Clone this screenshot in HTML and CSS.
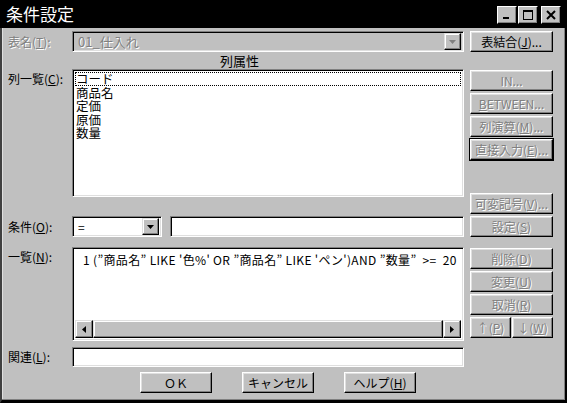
FILE: index.html
```html
<!DOCTYPE html>
<html lang="ja">
<head>
    <meta charset="UTF-8">
    <title>条件設定</title>
    <link rel="stylesheet" href="styles.css">
</head>
<body>
<div class="window">
    <div class="titlebar">
        <span class="title">条件設定</span>
        <div class="title-btns">
            <span class="tbtn">
                <svg width="10" height="10" viewBox="0 0 10 10"><rect x="1" y="7" width="6" height="2" fill="#000"/></svg>
            </span>
            <span class="tbtn">
                <svg width="12" height="12" viewBox="0 0 12 12"><rect x="1.5" y="1.5" width="9" height="9" fill="none" stroke="#000"/><rect x="1" y="1" width="10" height="2" fill="#000"/></svg>
            </span>
            <span class="tbtn close">
                <svg width="10" height="10" viewBox="0 0 10 10"><path d="M1 1 L9 9 M9 1 L1 9" stroke="#000" stroke-width="2"/></svg>
            </span>
        </div>
    </div>

    <div class="frame">
        <div class="main">
            <div class="row row-table">
                <span class="lbl off">表名(<u>T</u>):</span>
                <div class="combo wide off">
                    <span class="combo-val">01_仕入れ</span>
                    <span class="drop">
                        <svg width="7" height="4" viewBox="0 0 7 4"><path d="M0 0 H7 L3.5 4 Z" fill="#808080"/></svg>
                    </span>
                </div>
            </div>

            <div class="colhead">列属性</div>

            <div class="row row-cols">
                <span class="lbl">列一覧(<u>C</u>):</span>
                <ul class="listbox cols">
                    <li class="focus">コード</li>
                    <li>商品名</li>
                    <li>定価</li>
                    <li>原価</li>
                    <li>数量</li>
                </ul>
            </div>

            <div class="row row-cond">
                <span class="lbl">条件(<u>O</u>):</span>
                <div class="combo small">
                    <span class="combo-val">=</span>
                    <span class="drop">
                        <svg width="7" height="4" viewBox="0 0 7 4"><path d="M0 0 H7 L3.5 4 Z" fill="#000"/></svg>
                    </span>
                </div>
                <div class="field cond-text"></div>
            </div>

            <div class="row row-list">
                <span class="lbl">一覧(<u>N</u>):</span>
                <div class="listbox conds">
                    <div class="cond-line">1 (”商品名” LIKE '色%' OR ”商品名” LIKE 'ペン')AND ”数量”&nbsp; &gt;=&nbsp; 20</div>
                    <div class="hscroll">
                        <span class="sbtn">
                            <svg width="4" height="7" viewBox="0 0 4 7"><path d="M4 0 V7 L0 3.5 Z" fill="#000"/></svg>
                        </span>
                        <span class="thumb"></span>
                        <span class="sbtn">
                            <svg width="4" height="7" viewBox="0 0 4 7"><path d="M0 0 V7 L4 3.5 Z" fill="#000"/></svg>
                        </span>
                    </div>
                </div>
            </div>

            <div class="row row-rel">
                <span class="lbl">関連(<u>L</u>):</span>
                <div class="field rel-text"></div>
            </div>

            <div class="actions">
                <button class="btn">ＯＫ</button>
                <button class="btn">キャンセル</button>
                <button class="btn">ヘルプ(<u>H</u>)</button>
            </div>
        </div>

        <div class="side">
            <button class="btn b-join">表結合(<u>J</u>)...</button>
            <button class="btn off b-in">IN...</button>
            <button class="btn off"><u>B</u>ETWEEN...</button>
            <button class="btn off">列演算(<u>M</u>)...</button>
            <button class="btn off default">直接入力(<u>E</u>)...</button>
            <button class="btn off b-var">可変記号(<u>V</u>)...</button>
            <button class="btn off">設定(<u>S</u>)</button>
            <button class="btn off b-del">削除(<u>D</u>)</button>
            <button class="btn off">変更(<u>U</u>)</button>
            <button class="btn off">取消(<u>R</u>)</button>
            <div class="updown">
                <button class="btn off">↑(<u>P</u>)</button>
                <button class="btn off">↓(<u>W</u>)</button>
            </div>
        </div>
    </div>
</div>
</body>
</html>
```

FILE: styles.css
```css
body { margin: 0; font-family: "Noto Sans CJK JP", "Noto Sans", sans-serif; font-size: 12px; color: #000; }
u { text-decoration: underline; text-underline-offset: 1px; }

.window { width: 567px; height: 403px; background: #c0c0c0; display: flex; flex-direction: column; }

/* title bar */
.titlebar { height: 28px; background: #000; display: flex; align-items: center; justify-content: space-between; flex-shrink: 0; }
.title { color: #fff; font-size: 17px; padding-left: 6px; line-height: 28px; }
.title-btns { display: flex; padding-right: 6px; padding-top: 1px; }
.tbtn { box-sizing: border-box; width: 20px; height: 18px; background: #c0c0c0; display: flex; align-items: center; justify-content: center;
    border: 1px solid; border-color: #fff #000 #000 #fff; box-shadow: inset -1px -1px #808080; }
.tbtn + .tbtn { margin-left: 1px; }
.tbtn.close { margin-left: 3px; }

/* body frame */
.frame { flex: 1; display: flex; border-left: 2px solid #404040; border-right: 2px solid #000; border-bottom: 3px solid #000;
    box-shadow: inset -1px -1px #808080, inset 1px 0 #dfdfdf; padding-left: 6px; }

.main { width: 456px; display: flex; flex-direction: column; }
.row { display: flex; }
.lbl { width: 64px; flex-shrink: 0; white-space: nowrap; }
.off { color: #808080; text-shadow: 1px 1px 0 #fff; }

.row-table { margin-top: 3px; height: 21px; }
.row-table .lbl { line-height: 21px; }
.colhead { height: 17px; line-height: 17px; padding-left: 212px; font-size: 13px; }
.row-cols { height: 128px; }
.row-cols .lbl { padding-top: 1px; }
.row-cond { margin-top: 19px; height: 21px; }
.row-cond .lbl { line-height: 21px; }
.row-list { margin-top: 10px; height: 94px; }
.row-list .lbl { padding-top: 1px; }
.row-rel { margin-top: 6px; height: 20px; }
.row-rel .lbl { line-height: 20px; }

/* sunken controls */
.field, .listbox, .combo { box-sizing: border-box; border: 1px solid; border-color: #808080 #fff #fff #808080;
    box-shadow: inset 1px 1px #000, inset -1px -1px #dfdfdf; background: #fff; }
.field.cond-text { width: 294px; margin-left: 8px; }
.field.rel-text { width: 392px; }

.combo { display: flex; align-items: center; padding: 2px; }
.combo.wide { width: 392px; background: #c0c0c0; }
.combo.small { width: 90px; }
.combo-val { flex: 1; padding-left: 3px; line-height: 15px; }
.combo.wide .combo-val { font-size: 13px; }
.drop { box-sizing: border-box; width: 17px; height: 17px; background: #c0c0c0; display: flex; align-items: center; justify-content: center;
    border: 1px solid; border-color: #dfdfdf #000 #000 #dfdfdf; box-shadow: inset -1px -1px #808080, inset 1px 1px #fff; }

.listbox { width: 392px; margin: 0; padding: 2px; list-style: none; }
.cols li { font-size: 12.5px; line-height: 13.5px; height: 13.5px; padding-left: 1px; }
.cols li.focus { outline: 1px dotted #000; outline-offset: -1px; }

.conds { display: flex; flex-direction: column; justify-content: space-between; }
.cond-line { padding: 1px 0 0 8px; white-space: nowrap; overflow: hidden; letter-spacing: 0.35px; }
.hscroll { display: flex; height: 18px; }
.sbtn { box-sizing: border-box; width: 18px; height: 18px; display: flex; align-items: center; justify-content: center; background: #c0c0c0;
    border: 1px solid; border-color: #dfdfdf #000 #000 #dfdfdf; box-shadow: inset -1px -1px #808080, inset 1px 1px #fff; }
.thumb { flex: 1; box-sizing: border-box; background: #c0c0c0; border: 1px solid; border-color: #dfdfdf #000 #000 #dfdfdf;
    box-shadow: inset -1px -1px #808080, inset 1px 1px #fff; }

/* buttons */
.btn { box-sizing: border-box; height: 21px; padding: 0; background: #c0c0c0; font: inherit; color: #000; white-space: nowrap;
    border: 1px solid; border-color: #fff #000 #000 #fff; box-shadow: inset -1px -1px #808080, inset 1px 1px #dfdfdf; }
.btn.off { color: #808080; text-shadow: 1px 1px 0 #fff; }
.btn.default { outline: 1px solid #000; border-color: #fff #000 #000 #fff; }

.actions { display: flex; gap: 30px; margin-top: 5px; padding-left: 132px; }
.actions .btn { width: 72px; }

.side { width: 83px; margin-left: 6px; display: flex; flex-direction: column; gap: 2px; }
.side > .btn { width: 83px; }
.b-join { margin-top: 3px; }
.b-in { margin-top: 16px; }
.b-var { margin-top: 31px; }
.b-del { margin-top: 9px; }
.updown { display: flex; gap: 1px; }
.updown .btn { width: 41px; }
```
